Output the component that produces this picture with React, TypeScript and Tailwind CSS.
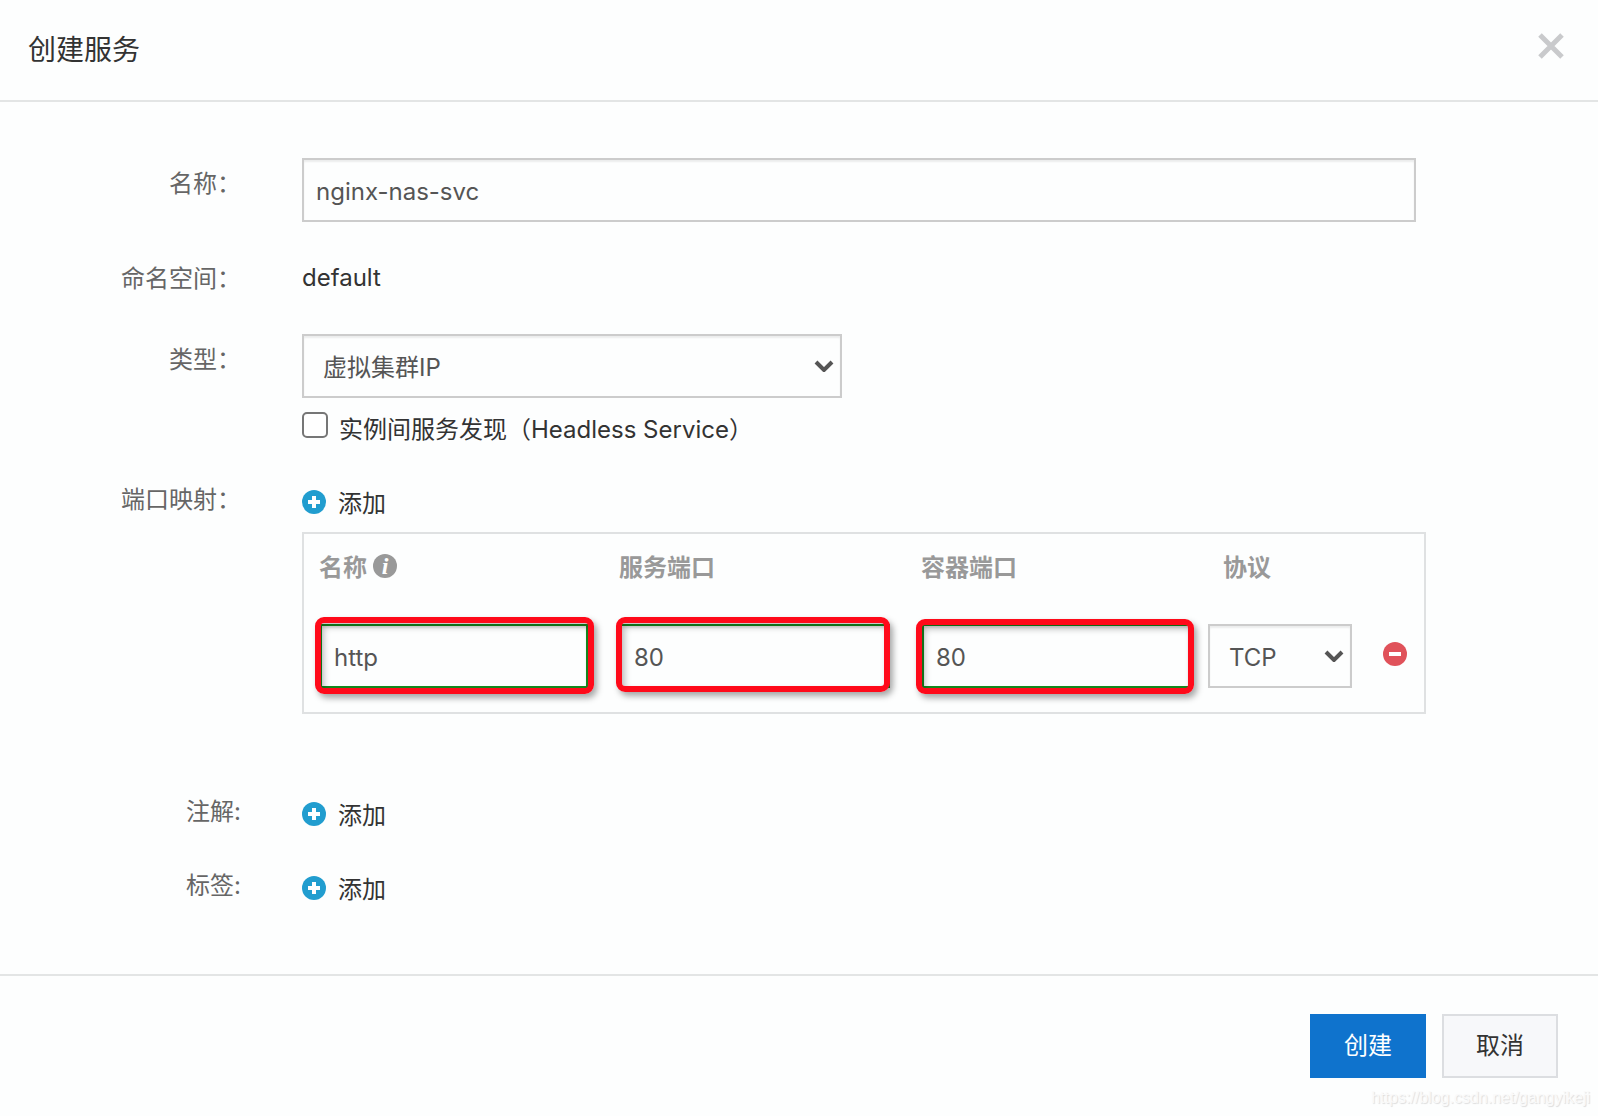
import React, { useState } from 'react';

const INPUT_CLASS =
  'block h-16 w-full border-2 bg-transparent px-3 pt-0.5 text-2xl text-[#555] shadow-[inset_0_2px_2px_rgba(0,0,0,0.07)] outline-none';

function PlusIcon(): React.ReactElement {
  return (
    <svg viewBox="0 0 24 24" className="h-6 w-6 shrink-0" aria-hidden="true">
      <circle cx="12" cy="12" r="12" fill="#219dcf" />
      <path d="M12 6v12M6 12h12" stroke="#fff" strokeWidth="4" />
    </svg>
  );
}

function MinusIcon(): React.ReactElement {
  return (
    <svg viewBox="0 0 24 24" className="h-6 w-6" aria-hidden="true">
      <circle cx="12" cy="12" r="12" fill="#e0525a" />
      <path d="M6 12h12" stroke="#fff" strokeWidth="4" />
    </svg>
  );
}

function AddButton(): React.ReactElement {
  return (
    <button type="button" className="flex h-9 items-start gap-3 text-2xl text-[#333]">
      <span className="pt-[5px]">
        <PlusIcon />
      </span>
      <span className="pt-px leading-9">添加</span>
    </button>
  );
}

function FormRow({
  label,
  htmlFor,
  labelClass,
  children,
}: {
  label: string;
  htmlFor?: string;
  labelClass: string;
  children: React.ReactNode;
}): React.ReactElement {
  return (
    <div className="flex items-start gap-[60px]">
      <label
        htmlFor={htmlFor}
        className={`w-[242px] shrink-0 pr-px text-right text-2xl leading-9 text-[#666] ${labelClass}`}
      >
        {label}
      </label>
      <div className="min-w-0 flex-1">{children}</div>
    </div>
  );
}

function SelectBox({
  id,
  label,
  options,
  className,
}: {
  id: string;
  label?: string;
  options: string[];
  className: string;
}): React.ReactElement {
  return (
    <div className={`relative ${className}`}>
      <select
        id={id}
        aria-label={label}
        className="block h-16 w-full appearance-none border-2 border-[#ccc] bg-transparent pt-1 pl-[19px] text-2xl text-[#555] shadow-[inset_0_2px_2px_rgba(0,0,0,0.07)] outline-none"
      >
        {options.map((option) => (
          <option key={option}>{option}</option>
        ))}
      </select>
      <svg
        viewBox="0 0 20 12"
        className="pointer-events-none absolute top-[26px] right-2 h-3 w-5"
        aria-hidden="true"
      >
        <path d="M2 2l8 8 8-8" fill="none" stroke="#555" strokeWidth="4" />
      </svg>
    </div>
  );
}

function MarkedInput({
  label,
  value,
  markClass,
  onChange,
}: {
  label: string;
  value: string;
  markClass: string;
  onChange(value: string): void;
}): React.ReactElement {
  return (
    <div className="relative">
      <input
        type="text"
        aria-label={label}
        value={value}
        onChange={(event) => onChange(event.target.value)}
        className={`${INPUT_CLASS} border-[#148a1e]`}
      />
      <span
        className={`pointer-events-none absolute rounded-[9px] border-6 border-[#ff0a1a] shadow-[3px_4px_6px_rgba(0,0,0,0.35),inset_3px_4px_6px_rgba(0,0,0,0.25)] ${markClass}`}
      />
    </div>
  );
}

export default function App(): React.ReactElement {
  const [name, setName] = useState<string>('nginx-nas-svc');
  const [portName, setPortName] = useState<string>('http');
  const [servicePort, setServicePort] = useState<string>('80');
  const [containerPort, setContainerPort] = useState<string>('80');

  return (
    <div
      lang="zh-CN"
      className="relative min-h-screen w-full bg-[#fdfefe] font-['Inter','Noto_Sans_CJK_SC',sans-serif] text-[#333]"
    >
      <header className="flex items-center justify-between border-b-2 border-[#e3e5e5] py-8 pr-[34px] pl-7">
        <h1 className="text-[28px] leading-9">创建服务</h1>
        <button type="button" aria-label="关闭" className="-mt-2">
          <svg viewBox="0 0 26 26" className="h-[26px] w-[26px]" aria-hidden="true">
            <path d="M2 2l22 22M24 2L2 24" stroke="#c9cacc" strokeWidth="5" />
          </svg>
        </button>
      </header>

      <main className="flex flex-col gap-[38px] pt-14 pr-[172px] pb-[67px]">
        <FormRow label="名称：" htmlFor="service-name" labelClass="pt-2">
          <div className="pr-2.5">
            <input
              id="service-name"
              type="text"
              value={name}
              onChange={(event) => setName(event.target.value)}
              className={`${INPUT_CLASS} border-[#ccc]`}
            />
          </div>
        </FormRow>

        <FormRow label="命名空间：" labelClass="-mb-px pt-px">
          <p className="text-2xl leading-9">default</p>
        </FormRow>

        <FormRow label="类型：" htmlFor="service-type" labelClass="pt-2">
          <SelectBox
            id="service-type"
            options={['虚拟集群IP', '节点端口', '负载均衡']}
            className="w-[540px] max-w-full"
          />
          <div className="mt-[13px] flex h-9 items-start gap-[11px]">
            <input
              id="headless"
              type="checkbox"
              className="mt-px h-[26px] w-[26px] appearance-none rounded-[5px] border-2 border-[#767676] bg-white checked:bg-[#0f73cd]"
            />
            <label htmlFor="headless" className="pt-px text-2xl leading-9">
              实例间服务发现（Headless Service）
            </label>
          </div>
        </FormRow>

        <FormRow label="端口映射：" labelClass="-mt-[3px]">
          <AddButton />
          <div className="mt-[11px] border-2 border-[#dfe1e2]">
            <table className="w-full table-fixed text-left">
              <colgroup>
                <col className="w-[300px]" />
                <col className="w-[302px]" />
                <col className="w-[286px]" />
                <col className="w-[160px]" />
                <col className="w-[72px]" />
              </colgroup>
              <thead>
                <tr className="h-[68px] text-2xl leading-9 text-[#999]">
                  <th className="pl-[15px] font-bold">
                    <span className="flex items-center gap-1.5">
                      名称
                      <span className="-mt-1 flex h-6 w-6 items-center justify-center rounded-full bg-[#999] font-['Liberation_Serif',serif] text-2xl leading-6 text-white italic">
                        i
                      </span>
                    </span>
                  </th>
                  <th className="pl-[15px] font-bold">服务端口</th>
                  <th className="pl-[15px] font-bold">容器端口</th>
                  <th className="pl-[31px] font-bold">协议</th>
                  <th />
                </tr>
              </thead>
              <tbody>
                <tr>
                  <td className="px-4 pt-[22px] pb-6">
                    <MarkedInput
                      label="名称"
                      value={portName}
                      onChange={setPortName}
                      markClass="-top-[7px] -right-1.5 -bottom-1.5 -left-[5px]"
                    />
                  </td>
                  <td className="px-4 pt-[22px] pb-6">
                    <MarkedInput
                      label="服务端口"
                      value={servicePort}
                      onChange={setServicePort}
                      markClass="-top-[7px] right-0 -bottom-1 -left-1"
                    />
                  </td>
                  <td className="pt-[22px] pr-0.5 pb-6 pl-4">
                    <MarkedInput
                      label="容器端口"
                      value={containerPort}
                      onChange={setContainerPort}
                      markClass="-top-[5px] -right-1 -bottom-1.5 -left-1.5"
                    />
                  </td>
                  <td className="pt-[22px] pb-6 pl-4">
                    <SelectBox
                      id="protocol"
                      label="协议"
                      options={['TCP', 'UDP']}
                      className="w-full"
                    />
                  </td>
                  <td className="pt-[22px] pb-6 pl-[31px]">
                    <button type="button" aria-label="删除" className="-mt-1 block">
                      <MinusIcon />
                    </button>
                  </td>
                </tr>
              </tbody>
            </table>
          </div>
        </FormRow>

        <div className="mt-[45px]">
          <FormRow label="注解:" labelClass="-mt-[3px]">
            <AddButton />
          </FormRow>
        </div>

        <FormRow label="标签:" labelClass="-mt-[3px]">
          <AddButton />
        </FormRow>
      </main>

      <footer className="flex justify-end gap-4 border-t-2 border-[#e3e5e5] px-10 py-[38px]">
        <button type="button" className="h-16 bg-[#0f73cd] px-[34px] text-2xl text-white">
          创建
        </button>
        <button
          type="button"
          className="h-16 border-2 border-[#dcdee1] bg-[#f7f8fa] px-8 text-2xl text-[#333]"
        >
          取消
        </button>
      </footer>

      <span className="absolute right-2 bottom-2 font-['Liberation_Sans',sans-serif] text-base leading-5 text-[#fafafa] [text-shadow:1px_1px_1px_#dcdcdc]">
        https://blog.csdn.net/gangyikeji
      </span>
    </div>
  );
}
